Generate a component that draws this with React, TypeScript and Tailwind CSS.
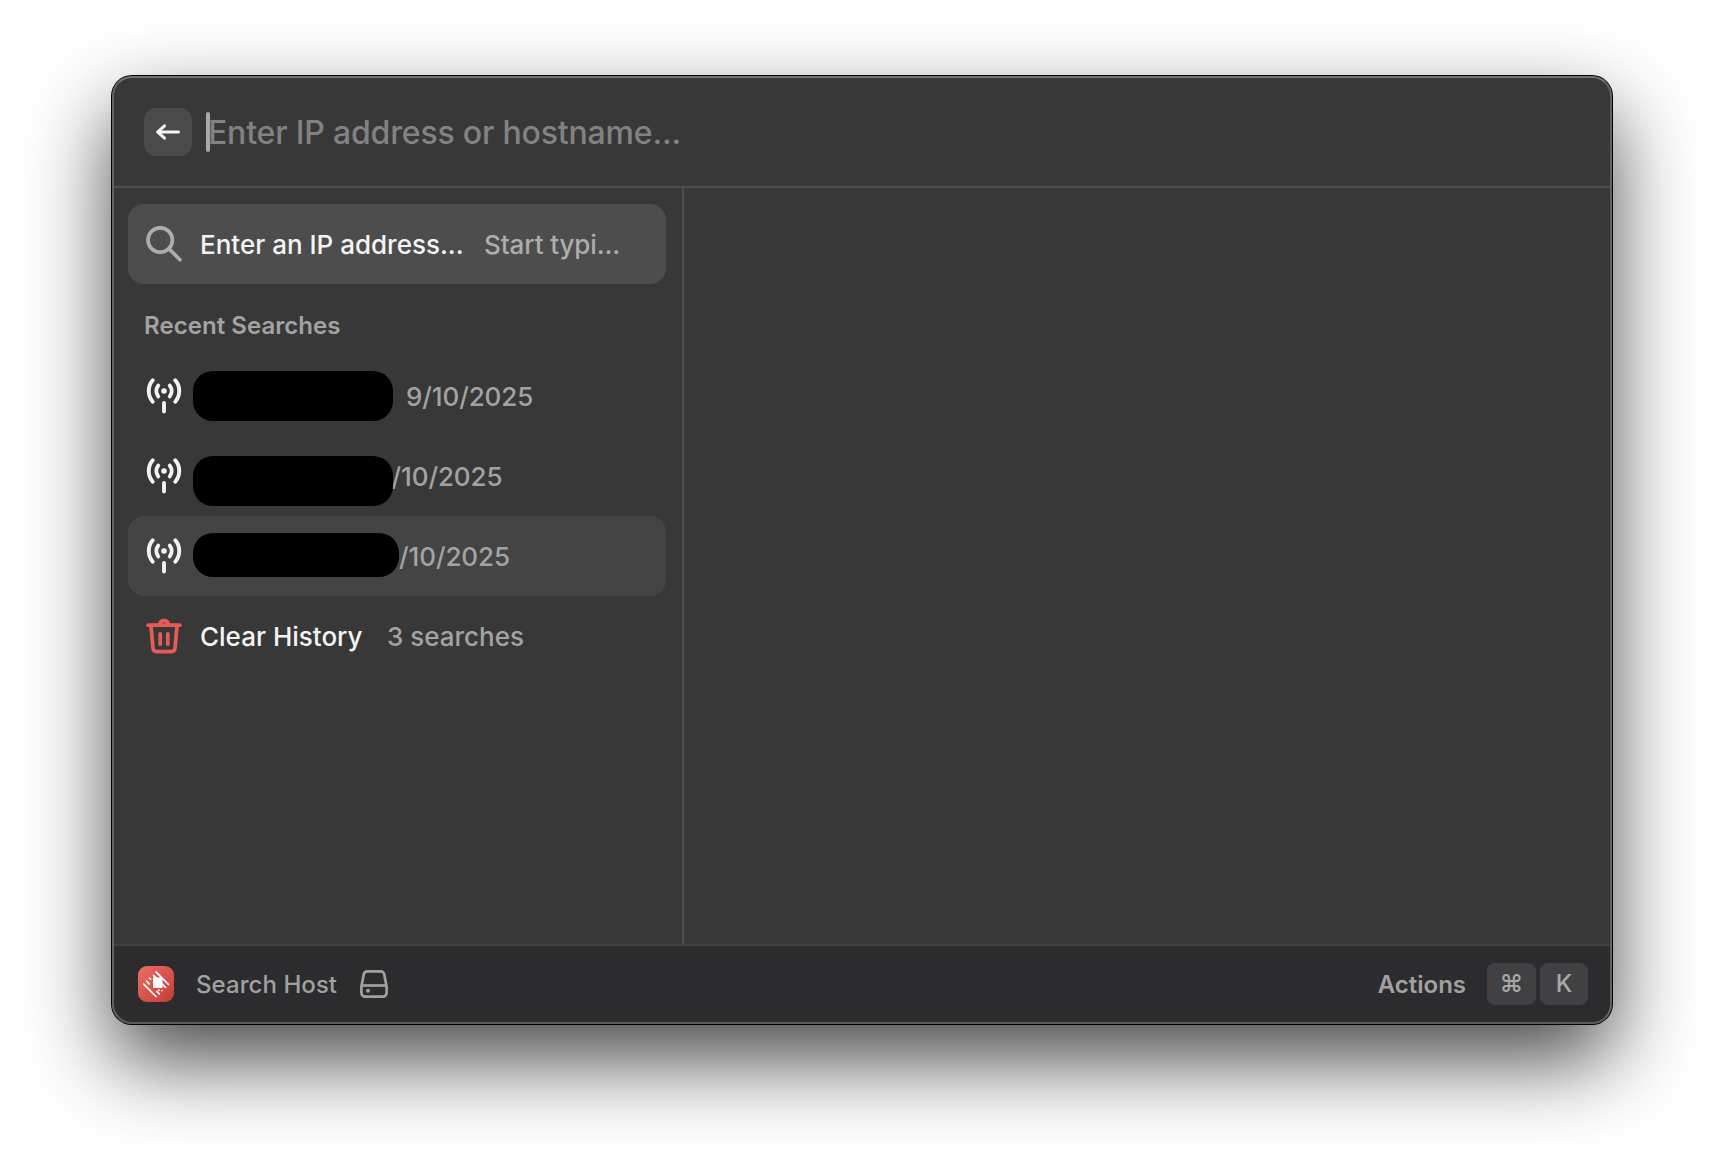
import React from "react";

function BackArrow() {
  return (
    <svg width="32" height="32" viewBox="0 0 16 16" fill="none" stroke="#f4f4f4" strokeWidth="1.5" strokeLinecap="round" strokeLinejoin="round">
      <path d="M13.250 8H2.900M6.250 4.900 2.800 8l3.450 3.100" />
    </svg>
  );
}

function SearchIcon() {
  return (
    <svg width="36" height="36" viewBox="0 0 36 36" fill="none" stroke="#adadad" strokeWidth="3.7" strokeLinecap="round">
      <circle cx="14.200" cy="14" r="12.200" />
      <path d="M23.200 23 34 33.800" />
    </svg>
  );
}

function AntennaIcon() {
  return (
    <svg width="36" height="36" viewBox="0 0 36 36" fill="none" stroke="#f2f2f2" strokeWidth="3.9" strokeLinecap="round">
      <circle cx="18" cy="13" r="2.800" fill="#f2f2f2" stroke="none" />
      <path d="M12.200 7.600a9 9 0 0 0 0 10.800M23.800 7.600a9 9 0 0 1 0 10.800" />
      <path d="M6.700 2.300a16.500 16.500 0 0 0 0 21.400M29.300 2.300a16.500 16.500 0 0 1 0 21.400" />
      <path d="M18 25v8.500" />
    </svg>
  );
}

function TrashIcon() {
  return (
    <svg width="36" height="36" viewBox="0 0 36 36" fill="none" stroke="#e85b54" strokeWidth="3.7" strokeLinecap="round" strokeLinejoin="round">
      <path d="M2.200 7.200h31.600" />
      <path d="M13.700 6a4.400 4.400 0 0 1 8.600 0" />
      <path d="M5 8l2 22.300a3.800 3.800 0 0 0 3.800 3.300h14.400a3.800 3.800 0 0 0 3.800-3.300L31 8" />
      <path d="M14.200 15.800v10.400M21.800 15.800v10.400" />
    </svg>
  );
}

function DriveIcon() {
  return (
    <svg width="28" height="28" viewBox="0 0 28 28" fill="none" stroke="#a1a1a2" strokeWidth="2.700" strokeLinejoin="round">
      <path d="M1.400 16.500 3.800 4.200a3.800 3.800 0 0 1 3.700-2.800h13a3.800 3.800 0 0 1 3.700 2.800l2.400 12.300v6.300a3.800 3.800 0 0 1-3.800 3.800H5.200a3.800 3.800 0 0 1-3.800-3.800z" />
      <path d="M1.600 15.500h24.800" />
      <circle cx="8" cy="20.700" r="2" fill="#a1a1a2" stroke="none" />
    </svg>
  );
}

function AppLogo() {
  return (
    <svg width="36" height="36" viewBox="0 0 36 36" fill="none">
      <defs>
        <linearGradient id="tile" x1="0" y1="0" x2="1" y2="1">
          <stop offset="0" stopColor="#ee6d66" />
          <stop offset="1" stopColor="#c23c36" />
        </linearGradient>
      </defs>
      <rect width="36" height="36" rx="9" fill="url(#tile)" />
      <path d="M15 11.500h9.500v10.500H15z" fill="#fff" />
      <g stroke="#fff" strokeWidth="1.700" strokeLinecap="round">
        <path d="M18.200 6.200 30.500 18.500" />
        <path d="M15.500 9.300l3 3M24.500 18.300l3 3" />
        <path d="M5.700 18.200 18 30.500" />
        <path d="M8.600 15.200l2.600 2.600M18.800 25.400l2.600 2.600" />
        <path d="M11.600 12.200v.01M12.600 13.200v.01M21 24.200v.01M24 24.600v.01" />
      </g>
    </svg>
  );
}

function Key({ children, className }: { children: React.ReactNode; className: string }) {
  return (
    <kbd className={`flex h-[42px] items-center justify-center rounded-lg bg-[#414143] font-[Inter,sans-serif] text-2xl font-medium text-[#a8a8a9] ${className}`}>
      {children}
    </kbd>
  );
}

function HistoryRow({ redaction, date, dateClass, active }: { redaction: string; date: string; dateClass: string; active?: boolean }) {
  return (
    <li className={`flex h-20 items-center rounded-2xl pl-[18px] ${active ? "bg-[#444445]" : ""}`}>
      <AntennaIcon />
      <span className={`relative z-10 ml-[11px] shrink-0 bg-black ${redaction}`} />
      <span className={`tracking-[-0.1px] text-[#a3a3a3] ${dateClass}`}>{date}</span>
    </li>
  );
}

export default function App() {
  return (
    <div className="flex h-[1172px] w-[1724px] items-start overflow-hidden bg-white pt-[76px] pl-28 font-[Inter,sans-serif] text-[26px] font-medium">
      <main className="relative flex h-[948px] w-[1500px] flex-col rounded-[20px] bg-[#383839] shadow-[0_0_0_1px_#000,0_36px_84px_rgba(0,0,0,0.72)]">
        <header className="flex h-28 shrink-0 items-center border-b-2 border-[#4e4e4e] pl-8">
          <button className="mt-0.5 flex size-12 items-center justify-center rounded-xl bg-[#4b4b4c]">
            <BackArrow />
          </button>
          <span className="mt-0.5 ml-3.5 h-10 w-1 rounded-sm bg-[#a9a9a9]" />
          <span className="mt-1 -ml-0.5 text-[32px] font-[450] tracking-[-0.18px] text-[#828282]">Enter IP address or hostname...</span>
        </header>

        <div className="flex min-h-0 flex-1">
          <aside className="w-[572px] shrink-0 border-r-2 border-[#4e4e4e] px-4 pt-4">
            <div className="flex h-20 w-[538px] items-center rounded-2xl bg-[#4d4d4e] pl-[18px]">
              <SearchIcon />
              <span className="ml-[18px] w-[284px] text-[#f4f4f4]">Enter an IP address...</span>
              <span className="tracking-[-0.1px] text-[#adadad]">Start typi...</span>
            </div>
            <h2 className="flex h-[72px] items-center pt-3 pl-4 text-2xl font-semibold tracking-[0.05px] text-[#a3a3a3]">Recent Searches</h2>
            <ul className="w-[538px]">
              <HistoryRow redaction="h-[50px] w-[200px] rounded-[20px]" date="9/10/2025" dateClass="ml-[13px]" />
              <HistoryRow redaction="mt-2.5 h-[50px] w-[200px] rounded-[20px]" date="/10/2025" dateClass="-ml-[1.5px]" />
              <HistoryRow redaction="-mt-0.5 h-11 w-[206px] rounded-[20px]" date="/10/2025" dateClass="" active />
              <li className="flex h-20 items-center pl-[18px]">
                <TrashIcon />
                <span className="ml-[18px] w-[187px] text-[#f4f4f4]">Clear History</span>
                <span className="text-[#a3a3a3]">3 searches</span>
              </li>
            </ul>
          </aside>
          <section className="flex-1" />
        </div>

        <footer className="flex h-20 shrink-0 items-center rounded-b-[20px] border-t-2 border-[#404041] bg-[#2c2c2e] pr-6 pb-0.5 pl-[26px] text-2xl text-[#a1a1a2]">
          <AppLogo />
          <span className="mr-[23px] ml-[22px] pt-0.5 tracking-[0.06px]">Search Host</span>
          <DriveIcon />
          <span className="mr-[21px] ml-auto pt-0.5 font-semibold">Actions</span>
          <Key className="w-[49px]">⌘</Key>
          <Key className="ml-1 w-12">K</Key>
        </footer>
        <div className="pointer-events-none absolute inset-0 rounded-[20px] border-2 border-x-[#626262] border-t-[#727372] border-b-[#5c5c5c]" />
      </main>
    </div>
  );
}
